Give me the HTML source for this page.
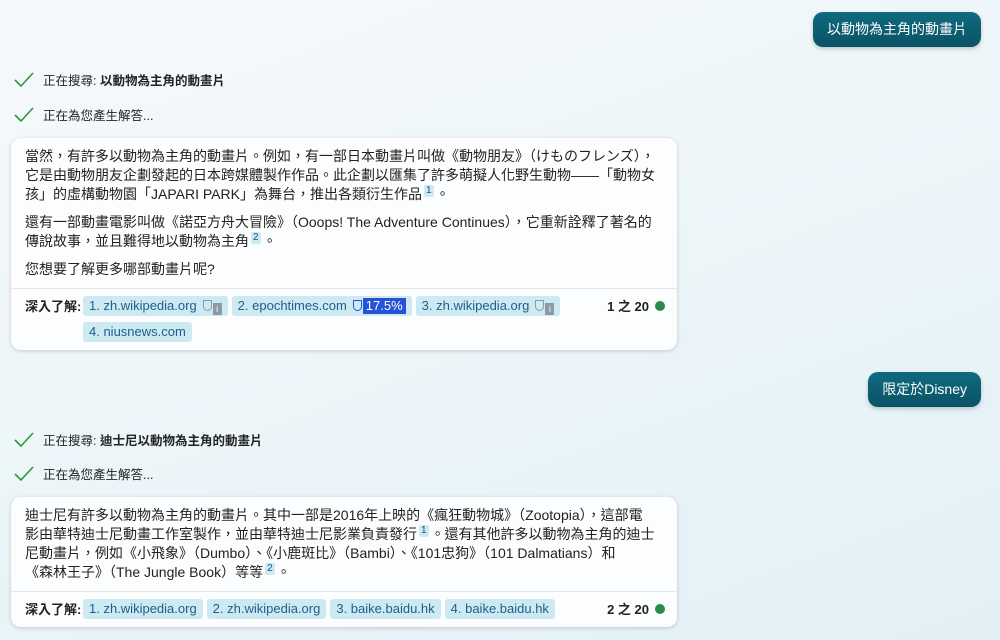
<!DOCTYPE html>
<html><head><meta charset="utf-8"><style>
*{box-sizing:border-box;margin:0;padding:0}
body{width:1000px;height:640px;overflow:hidden;position:relative;font-family:"Liberation Sans","Noto Sans CJK TC",sans-serif;color:#222;
background:linear-gradient(160deg,#f6f9fb 0%,#eef6f9 40%,#e2f0f6 100%);}
.bub{position:absolute;right:19px;height:35px;border-radius:10px;background:linear-gradient(#0f6a7e,#0a5366);color:#fff;font-size:14px;line-height:35px;padding:0 14px;box-shadow:0 2px 4px rgba(0,0,0,.2)}
.st{position:absolute;left:14px;font-size:12.5px;color:#222;display:flex;align-items:center;white-space:pre}
.st svg{margin-right:9px}
.card{position:absolute;left:11px;width:666px;background:#fcfdfe;border-radius:10px;box-shadow:0 1px 4px rgba(0,0,0,.18)}
.txt{padding:9px 10px 0 14px;font-size:14px;line-height:19px;color:#222;white-space:nowrap}
.txt p{margin-bottom:9px}
.sup{display:inline-block;background:#cdeaf2;color:#1a4f8a;font-size:10px;line-height:12px;padding:0 2px;vertical-align:6px;border-radius:2px;margin:0 2px}
.foot{border-top:1px solid #e3e6e8;padding:7px 14px 0 14px;position:relative;font-size:13px}
.lbl{position:absolute;left:14px;top:7px;font-weight:bold;font-size:13px}
.chips{margin-left:58px;width:510px}
.chip{display:inline-block;background:#cde9f1;color:#1e5f8c;height:20px;line-height:20px;padding:0 6px;border-radius:3px;margin:0 4px 6px 0;font-size:13px}
.ic{display:inline-block;width:9px;height:11px;border:1.5px solid #8a9aa6;border-radius:0 0 5px 5px;vertical-align:-1px;margin-left:6px}
.ii{display:inline-block;width:9px;height:12px;background:#8a9aa6;color:#fff;font-size:9px;line-height:12px;text-align:center;vertical-align:-2px;margin-left:1px}
.pct{display:inline-block;background:#2453d6;color:#fff;padding:0 3px;line-height:16px;margin-left:1px}
.cnt{position:absolute;right:12px;top:7px;font-weight:bold;font-size:13px;display:flex;align-items:center}
.cnt i{display:inline-block;width:10px;height:10px;border-radius:50%;background:#2a8a4a;margin-left:6px}
</style></head><body>
<div class="bub" style="top:12px">以動物為主角的動畫片</div>
<div class="bub" style="top:372px">限定於Disney</div>

<div class="st" style="top:70px"><svg width="20" height="16" viewBox="0 0 20 16"><path d="M1 8l6 6L19 1" fill="none" stroke="#2a9a3a" stroke-width="1.6"/></svg>正在搜尋: <b>以動物為主角的動畫片</b></div>
<div class="st" style="top:105px"><svg width="20" height="16" viewBox="0 0 20 16"><path d="M1 8l6 6L19 1" fill="none" stroke="#2a9a3a" stroke-width="1.6"/></svg>正在為您產生解答...</div>

<div class="card" style="top:138px;height:212px">
<div class="txt">
<p>當然，有許多以動物為主角的動畫片。例如，有一部日本動畫片叫做《動物朋友》（けものフレンズ），<br>它是由動物朋友企劃發起的日本跨媒體製作作品。此企劃以匯集了許多萌擬人化野生動物——「動物女<br>孩」的虛構動物園「JAPARI PARK」為舞台，推出各類衍生作品<span class="sup">1</span>。</p>
<p>還有一部動畫電影叫做《諾亞方舟大冒險》（Ooops! The Adventure Continues），它重新詮釋了著名的<br>傳說故事，並且難得地以動物為主角<span class="sup">2</span>。</p>
<p>您想要了解更多哪部動畫片呢?</p>
</div>
<div class="foot" style="position:absolute;top:150px;left:0;right:0">
<span class="lbl">深入了解:</span>
<div class="chips"><span class="chip">1. zh.wikipedia.org<span class="ic"></span><span class="ii">i</span></span><span class="chip">2. epochtimes.com<span class="ic" style="border-color:#2453d6"></span><span class="pct">17.5%</span></span><span class="chip">3. zh.wikipedia.org<span class="ic"></span><span class="ii">i</span></span><span class="chip">4. niusnews.com</span></div>
<span class="cnt">1 之 20<i></i></span>
</div>
</div>

<div class="st" style="top:430px"><svg width="20" height="16" viewBox="0 0 20 16"><path d="M1 8l6 6L19 1" fill="none" stroke="#2a9a3a" stroke-width="1.6"/></svg>正在搜尋: <b>迪士尼以動物為主角的動畫片</b></div>
<div class="st" style="top:464px"><svg width="20" height="16" viewBox="0 0 20 16"><path d="M1 8l6 6L19 1" fill="none" stroke="#2a9a3a" stroke-width="1.6"/></svg>正在為您產生解答...</div>

<div class="card" style="top:497px;height:130px">
<div class="txt">
<p>迪士尼有許多以動物為主角的動畫片。其中一部是2016年上映的《瘋狂動物城》（Zootopia），這部電<br>影由華特迪士尼動畫工作室製作，並由華特迪士尼影業負責發行<span class="sup">1</span>。還有其他許多以動物為主角的迪士<br>尼動畫片，例如《小飛象》（Dumbo）、《小鹿斑比》（Bambi）、《101忠狗》（101 Dalmatians）和<br>《森林王子》（The Jungle Book）等等<span class="sup">2</span>。</p>
</div>
<div class="foot" style="position:absolute;top:94px;left:0;right:0">
<span class="lbl">深入了解:</span>
<div class="chips" style="width:560px"><span class="chip">1. zh.wikipedia.org</span><span class="chip">2. zh.wikipedia.org</span><span class="chip">3. baike.baidu.hk</span><span class="chip">4. baike.baidu.hk</span></div>
<span class="cnt">2 之 20<i></i></span>
</div>
</div>
</body></html>
